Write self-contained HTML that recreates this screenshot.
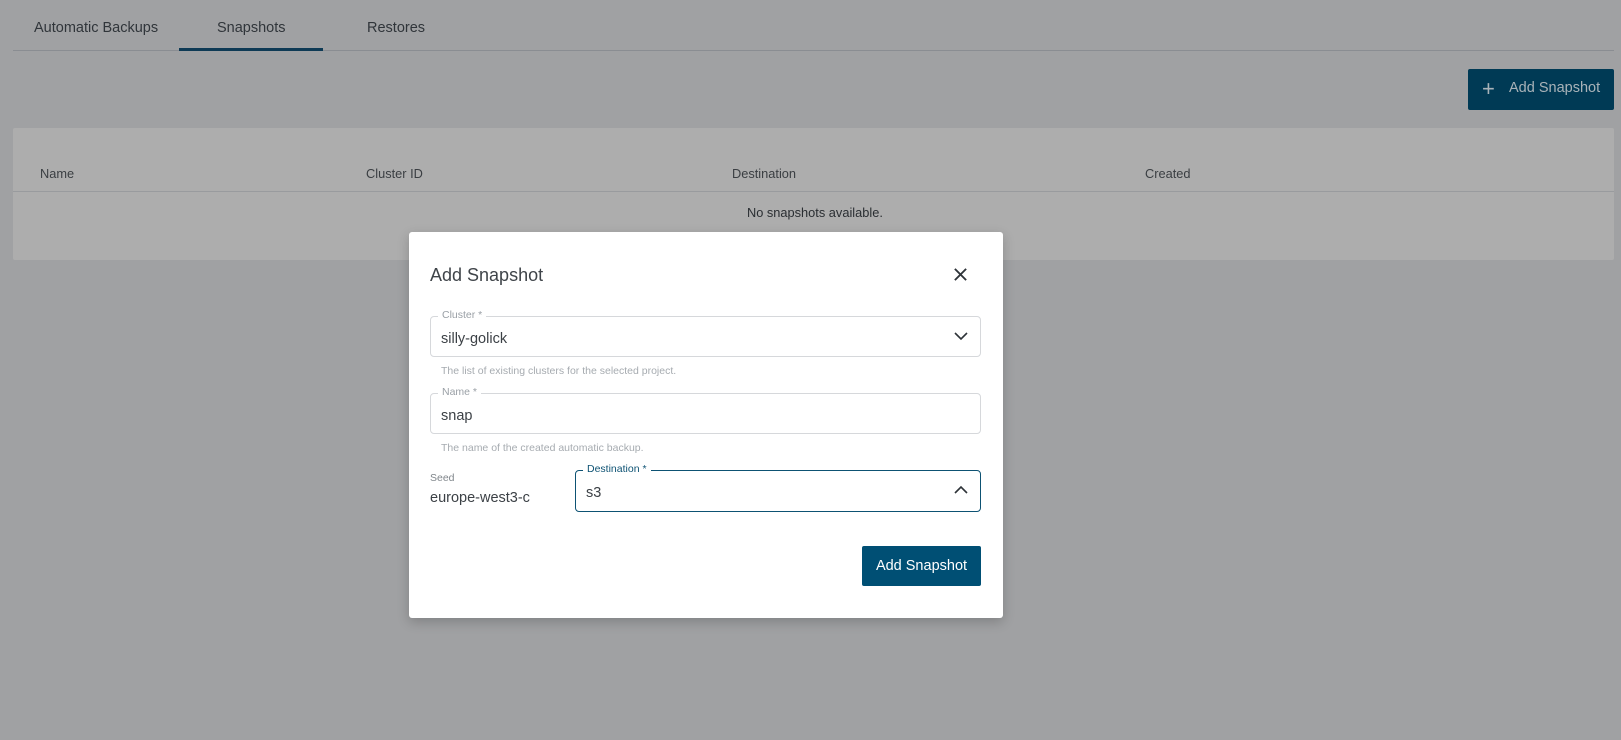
<!DOCTYPE html>
<html><head><style>
*{box-sizing:border-box;margin:0;padding:0}
body{width:1621px;height:740px;overflow:hidden;background:#a0a1a3;font-family:"Liberation Sans",sans-serif;position:relative;color:#2e3338}
.a{position:absolute;white-space:nowrap}
.field{position:absolute;border:1px solid #d6d8db;border-radius:4px}
.lbl{position:absolute;top:-8px;left:7px;background:#fff;padding:0 4px;font-size:10.5px;color:#9aa0a6}
.val{position:absolute;left:10px;top:14px;font-size:14.5px;color:#3c4146}
.hint{position:absolute;font-size:10.5px;color:#a6abb0;left:441px}
</style></head><body>
<div class="a" style="left:34px;top:20px;font-size:14.5px;color:#30353a">Automatic Backups</div>
<div class="a" style="left:217px;top:20px;font-size:14.5px;color:#30353a">Snapshots</div>
<div class="a" style="left:367px;top:20px;font-size:14.5px;color:#30353a">Restores</div>
<div class="a" style="left:13px;top:50px;width:1601px;height:1px;background:#8a8d92"></div>
<div class="a" style="left:179px;top:48px;width:144px;height:3px;background:#0e3a55"></div>
<div class="a" style="left:1468px;top:69px;width:146px;height:41px;background:#003a55;border-radius:2px"></div>
<div class="a" style="left:1482px;top:78px;font-size:22px;color:#a9b3b9;line-height:22px">+</div>
<div class="a" style="left:1509px;top:80px;font-size:14.5px;color:#a9b3b9">Add Snapshot</div>
<div class="a" style="left:13px;top:128px;width:1601px;height:132px;background:#adadad;border-radius:2px"></div>
<div class="a" style="left:40px;top:166px;font-size:12.8px;color:#3a3e42">Name</div>
<div class="a" style="left:366px;top:166px;font-size:12.8px;color:#3a3e42">Cluster ID</div>
<div class="a" style="left:732px;top:166px;font-size:12.8px;color:#3a3e42">Destination</div>
<div class="a" style="left:1145px;top:166px;font-size:12.8px;color:#3a3e42">Created</div>
<div class="a" style="left:13px;top:191px;width:1601px;height:1px;background:#999b9e"></div>
<div class="a" style="left:747px;top:205px;font-size:12.8px;color:#2a2e32">No snapshots available.</div>

<div class="a" style="left:409px;top:232px;width:594px;height:386px;background:#fff;border-radius:3px;box-shadow:0 4px 12px rgba(0,0,0,.2)"></div>
<div class="a" style="left:430px;top:265px;font-size:18px;color:#3f4449">Add Snapshot</div>
<svg class="a" style="left:953px;top:267px" width="15" height="15" viewBox="0 0 16 16"><path d="M2 2L14 14M14 2L2 14" stroke="#2e3338" stroke-width="2"/></svg>

<div class="field" style="left:430px;top:316px;width:551px;height:41px"><span class="lbl">Cluster *</span><span class="val">silly-golick</span>
<svg style="position:absolute;right:12px;top:14px" width="14" height="10" viewBox="0 0 14 10"><path d="M1 2L7 8L13 2" stroke="#2e3338" stroke-width="1.6" fill="none"/></svg></div>
<div class="a hint" style="top:365px">The list of existing clusters for the selected project.</div>
<div class="field" style="left:430px;top:393px;width:551px;height:41px"><span class="lbl">Name *</span><span class="val">snap</span></div>
<div class="a hint" style="top:442px">The name of the created automatic backup.</div>
<div class="a" style="left:430px;top:472px;font-size:10.5px;color:#80868b">Seed</div>
<div class="a" style="left:430px;top:490px;font-size:14.5px;color:#3c4146">europe-west3-c</div>
<div class="field" style="left:575px;top:470px;width:406px;height:42px;border-color:#0d5273"><span class="lbl" style="color:#0d5273">Destination *</span><span class="val">s3</span>
<svg style="position:absolute;right:12px;top:14px" width="14" height="10" viewBox="0 0 14 10"><path d="M1 8L7 2L13 8" stroke="#2e3338" stroke-width="1.6" fill="none"/></svg></div>
<div class="a" style="left:862px;top:546px;width:119px;height:40px;background:#004f74;border-radius:2px;color:#fff;font-size:14.5px;text-align:center;line-height:40px">Add Snapshot</div>
</body></html>
